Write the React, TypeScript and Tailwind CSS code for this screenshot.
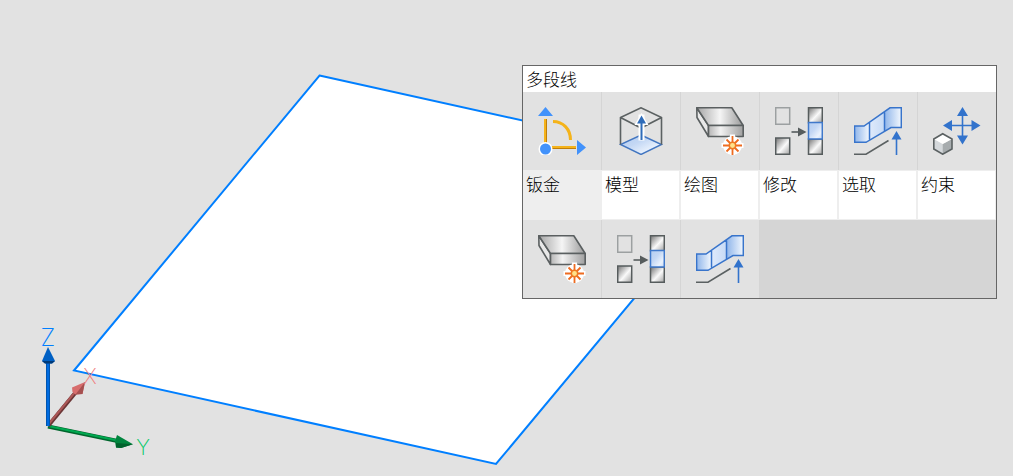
import type { ReactNode } from "react";

type IconProps = { children: ReactNode };

function Icon({ children }: IconProps) {
  return (
    <svg viewBox="0 0 48 48" className="h-12 w-12" fill="none" aria-hidden="true">
      {children}
    </svg>
  );
}

function SketchIcon() {
  return (
    <Icon>
      <path d="M6 12h3v26H6z" fill="#f5b31b" />
      <path d="M8 12h1v26H8z" fill="#c07f0c" />
      <path d="M12 39h26v3H12z" fill="#f5b31b" />
      <path d="M12 41h26v1H12z" fill="#c07f0c" />
      <path d="M15 14.5C25 14.5 32.5 22 32.5 33" stroke="#f4b31a" strokeWidth="3" />
      <path d="M7.5 0L15 9H0zM39 33l9 7.5-9 7.5z" fill="#4292fb" />
      <circle cx="7.5" cy="42" r="7" fill="#fff" />
      <circle cx="7.5" cy="42" r="5.5" fill="#4292fb" />
    </Icon>
  );
}

function ExtrudeIcon() {
  return (
    <Icon>
      <path d="M24 28l20.5 9.5-20.5 10-20.5-10z" fill="url(#blueFace)" stroke="#4376c0" strokeWidth="1.4" />
      <path d="M3.5 37.5v-27L24 .8l20.5 9.7v27M3.5 10.5L24 21l20.5-10.5" stroke="#5b6162" strokeWidth="1.6" />
      <path d="M24.5 7.5v26" stroke="#fff" strokeWidth="6" />
      <path d="M24.5 6L31.5 18h-14z" fill="#fff" />
      <path d="M24.5 14v19" stroke="#2f6cb9" strokeWidth="2" />
      <path d="M24.5 8.5L29 16.5h-9z" fill="#2f6cb9" />
    </Icon>
  );
}

function PlateIcon() {
  return (
    <Icon>
      <g stroke="#5a5f60" strokeWidth="1.6" strokeLinejoin="round">
        <path d="M.8.8L12.5 18.5v11L1 10.5z" fill="#e8e8e8" />
        <path d="M.8.8h35L47.2 18.5H12.5z" fill="url(#metalTop)" />
        <path d="M12.5 18.5h34.7v11H12.5z" fill="url(#metalFront)" />
      </g>
      <circle cx="36.5" cy="38.5" r="9.5" fill="#fff" />
      <path d="M36.5 27.5v22M25.5 38.5h22" stroke="#fff" strokeWidth="5" />
      <path d="M36.5 29v19M27 38.5h19M30.5 32.5l12 12M42.5 32.5l-12 12" stroke="#ee6b20" strokeWidth="1.8" />
      <circle cx="36.5" cy="38.5" r="3.2" fill="#ffe28a" stroke="#ee7a24" strokeWidth="1.5" />
    </Icon>
  );
}

function MirrorIcon() {
  return (
    <Icon>
      <path d="M.7.7h14v16.6H.7z" stroke="#9ca0a1" strokeWidth="1.5" />
      <g fill="url(#metal)" stroke="#565c5d" strokeWidth="1.5">
        <path d="M.7 31h14v16.3H.7z" />
        <path d="M33.5.7h13.8v15H33.5z" />
        <path d="M33.5 32h13.8v15.3H33.5z" />
      </g>
      <path d="M33.5 15.5h13.8V32H33.5z" fill="url(#blueFace)" stroke="#3f78ca" strokeWidth="1.5" />
      <path d="M16.5 25H25" stroke="#565c5d" strokeWidth="1.6" />
      <path d="M23 20.5l8.5 4.5-8.5 4.5z" fill="#565c5d" />
    </Icon>
  );
}

function FlangeIcon() {
  return (
    <Icon>
      <path d="M.5 19H10l5.5-4v18L12 35.3H.5z" fill="url(#blueBand)" />
      <path d="M15.5 15l15-9.5V24l-15 9z" fill="url(#bluePanel)" />
      <path d="M30.5 5.5L36.5.8h11v19.7H37L30.5 24z" fill="url(#blueBand)" />
      <path
        d="M.5 19H10L36 .8h11.3v19.7H37L12 35.3H.7zM15.5 15.5v17M30.5 5.5V24"
        stroke="#3874cb"
        strokeWidth="1.5"
      />
      <path d="M0 47.2h12l22.5-13.7" stroke="#5b6162" strokeWidth="1.6" />
      <path d="M42.5 31v17" stroke="#3273cc" strokeWidth="1.6" />
      <path d="M42.5 24l5 8.5h-10z" fill="#3273cc" />
    </Icon>
  );
}

function MoveIcon() {
  return (
    <Icon>
      <path d="M29.5 6v25M17 18.5h25" stroke="#3273cc" strokeWidth="1.6" />
      <path
        d="M29.5 0l5.5 9H24zM29.5 37.5l5.5-9H24zM10 18.5l9-5.5v11zM47.5 18.5l-9-5.5v11z"
        fill="#3273cc"
      />
      <path d="M9.7 37L.8 32v10l8.9 5.2z" fill="#d4d8db" />
      <path d="M9.7 37l9.3-5v10l-9.3 5.2z" fill="#a7acae" />
      <path d="M9.7 26.7L19 32l-9.3 5-8.9-5z" fill="#fff" />
      <path d="M9.7 26.7L19 32v10l-9.3 5.2L.8 42V32z" stroke="#5b6162" strokeWidth="1.6" />
    </Icon>
  );
}

const tools = [
  { label: "钣金", icon: <SketchIcon /> },
  { label: "模型", icon: <ExtrudeIcon /> },
  { label: "绘图", icon: <PlateIcon /> },
  { label: "修改", icon: <MirrorIcon /> },
  { label: "选取", icon: <FlangeIcon /> },
  { label: "约束", icon: <MoveIcon /> },
];

// most recently used commands
const recent = tools.slice(2, 5);

function Viewport() {
  return (
    <svg className="absolute inset-0 h-full w-full" aria-hidden="true">
      <defs>
        <linearGradient id="blueFace" x1="0" y1="0" x2="1" y2="1">
          <stop offset="0" stopColor="#b4cdf1" />
          <stop offset="0.4" stopColor="#c3d7f4" />
          <stop offset="0.75" stopColor="#eaf2fd" />
          <stop offset="1" stopColor="#c3d7f4" />
        </linearGradient>
        <linearGradient id="bluePanel">
          <stop offset="0" stopColor="#dfeafb" />
          <stop offset="1" stopColor="#c6daf6" />
        </linearGradient>
        <linearGradient id="blueBand">
          <stop offset="0" stopColor="#8fb5ea" />
          <stop offset="1" stopColor="#f3f8fe" />
        </linearGradient>
        <linearGradient id="metal" x1="0" y1="0" x2="1" y2="1">
          <stop offset="0.1" stopColor="#8c8c8c" />
          <stop offset="0.55" stopColor="#fafafa" />
          <stop offset="1" stopColor="#a2a2a2" />
        </linearGradient>
        <linearGradient id="metalTop">
          <stop offset="0" stopColor="#a5a5a5" />
          <stop offset="0.5" stopColor="#f5f5f5" />
          <stop offset="1" stopColor="#999" />
        </linearGradient>
        <linearGradient id="metalFront">
          <stop offset="0" stopColor="#b5b5b5" />
          <stop offset="0.35" stopColor="#f2f2f2" />
          <stop offset="1" stopColor="#a0a0a0" />
        </linearGradient>
      </defs>

      <path d="M319.5 75.5L742 169 496 464 74 370.5z" fill="#fff" stroke="#007fff" strokeWidth="2" />

      {/* Y axis */}
      <path d="M48 426.5l72 15" stroke="#00662d" strokeWidth="4" />
      <path d="M48 426l72 15" stroke="#00a850" strokeWidth="2" />
      <path d="M117 435l16 9.3-12 3.7-5-.5-1-6z" fill="#00853e" />
      <path d="M116 443l17 1.3-12 3.7-5-.5z" fill="#00622c" />

      {/* X axis */}
      <path d="M48 426l28-34" stroke="#6b3535" strokeWidth="4" />
      <path d="M47.5 425.5l28-34" stroke="#ac5858" strokeWidth="2" />
      <path d="M85 382l-13 5.5.5 4.5 3 2.5 7-.5z" fill="#d76d6d" />
      <path d="M85 382l-2.5 12-7 .5z" fill="#a65050" />

      {/* Z axis */}
      <path d="M48 426v-64" stroke="#0055b0" strokeWidth="4" />
      <path d="M48 426v-64" stroke="#006be0" strokeWidth="2" />
      <path d="M48 347l7 14-3 2.5h-7L42 361z" fill="#0060c4" />
      <path d="M42 361h13l-3 2.5h-7z" fill="#003a78" />

      <g className="font-['Inter'] font-extralight" textAnchor="middle">
        <text x="48" y="346" fontSize="24" fill="#007fff">Z</text>
        <text x="90" y="384" fontSize="21" fill="#f08080">X</text>
        <text x="143" y="455" fontSize="21" fill="#00c864">Y</text>
      </g>
    </svg>
  );
}

export default function App() {
  return (
    <main className="relative flex min-h-screen items-start justify-end bg-[#e2e2e2] pt-[65px] pr-4 font-['Noto_Sans_CJK_SC',sans-serif] font-light text-black">
      <Viewport />
      <section className="relative w-[475px] border border-[#666] bg-white text-[17px]">
        <h1 className="h-[26px] px-[3px] leading-[26px]">多段线</h1>
        <div className="grid grid-cols-[repeat(5,79px)_1fr] bg-[#e2e2e2]">
          {tools.map((tool) => (
            <button
              key={tool.label}
              aria-label={tool.label}
              className="flex h-[78px] items-center justify-center border-r border-[#d5d5d5] last:border-r-0"
            >
              {tool.icon}
            </button>
          ))}
        </div>
        <div className="grid grid-cols-[repeat(5,79px)_1fr]">
          {tools.map((tool, i) => (
            <button
              key={tool.label}
              className={`flex h-[50px] items-start border-y border-r-2 border-[#eee] px-[3px] leading-[26px] last:border-r ${i === 0 ? "bg-[#eee]" : "bg-white"}`}
            >
              {tool.label}
            </button>
          ))}
        </div>
        <div className="grid grid-cols-[repeat(5,79px)_1fr] bg-[#d5d5d5]">
          {recent.map((tool) => (
            <button
              key={tool.label}
              aria-label={tool.label}
              className="flex h-[78px] items-center justify-center border-r border-[#d5d5d5] bg-[#e2e2e2]"
            >
              {tool.icon}
            </button>
          ))}
        </div>
      </section>
    </main>
  );
}
